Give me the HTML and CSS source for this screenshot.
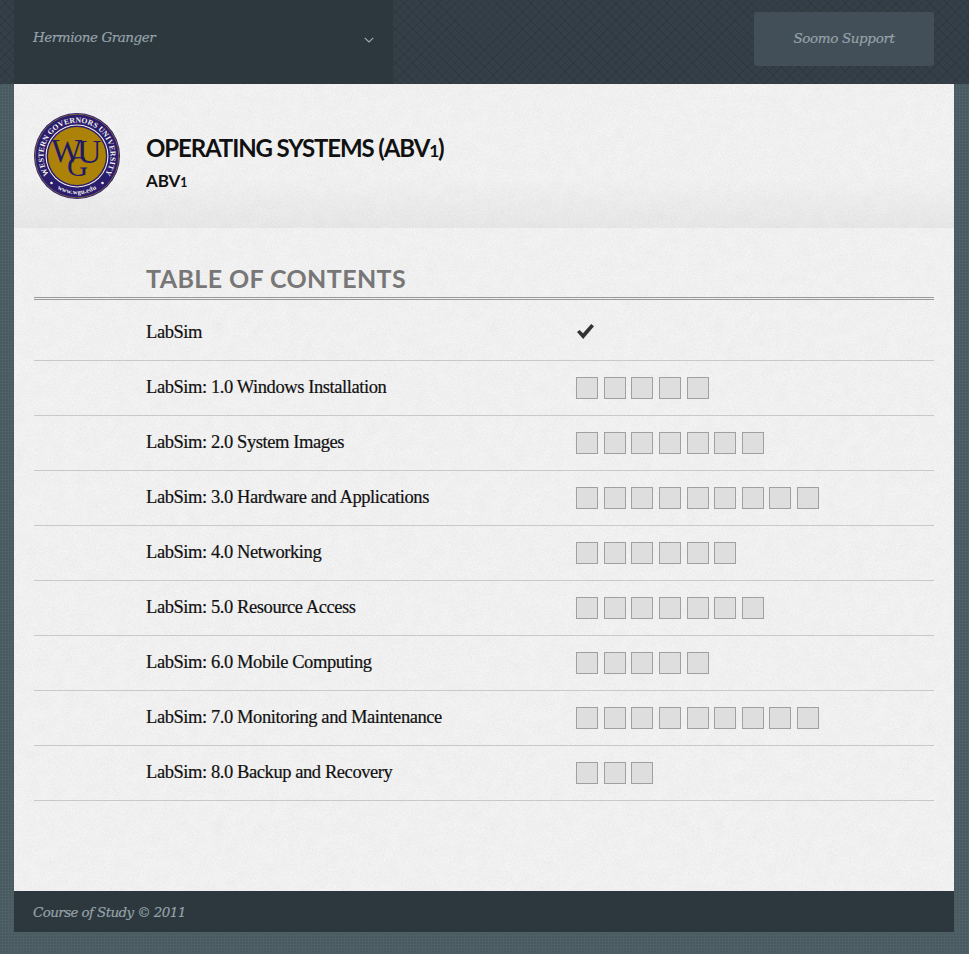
FILE: index.html
```html
<!DOCTYPE html>
<html lang="en">
<head>
<meta charset="utf-8">
<title>Operating Systems (ABV1)</title>
<link rel="stylesheet" href="styles.css">
</head>
<body>
<header class="topbar">
  <div class="user-menu">
    <span class="user-name">Hermione Granger</span>
    <svg class="chevron" width="10" height="6" viewBox="0 0 10 6"><path d="M.7.8 5 5 9.3.8" fill="none" stroke="#a3b0b5" stroke-width="1.1"/></svg>
  </div>
  <a class="support"><span class="support-label">Soomo Support</span></a>
</header>
<main class="paper">
  <section class="course">
    <svg class="logo" width="86" height="86" viewBox="0 0 86 86">
      <defs>
        <path id="arc-top" d="M17.3 64.5A33.5 33.5 0 1 1 68.7 64.5"/>
        <path id="arc-bottom" d="M15.5 69.5A38.2 38.2 0 0 0 70.5 69.5"/>
      </defs>
      <circle cx="43" cy="43" r="43" fill="#2a1d6e"/>
      <circle cx="43" cy="43" r="41.8" fill="none" stroke="#a98a2a" stroke-width=".6"/>
      <circle cx="43" cy="43" r="31.5" fill="#f2f0e4"/>
      <circle cx="43" cy="43" r="30.4" fill="#2a1d6e"/>
      <circle cx="43" cy="43" r="29" fill="#ad8208"/>
      <text class="seal-text"><textPath href="#arc-top" startOffset="50%" text-anchor="middle">WESTERN GOVERNORS UNIVERSITY</textPath></text>
      <text class="seal-url"><textPath href="#arc-bottom" startOffset="50%" text-anchor="middle">www.wgu.edu</textPath></text>
      <circle cx="17.5" cy="70" r="1.3" fill="#f2f0e4"/>
      <circle cx="68.5" cy="70" r="1.3" fill="#f2f0e4"/>
      <text class="seal-w" x="17" y="49">W</text>
      <text class="seal-u" x="43" y="50">U</text>
      <text class="seal-g" x="33" y="63">G</text>
    </svg>
    <div class="course-titles">
      <h1 class="course-name">Operating Systems (ABV<span class="small-one">1</span>)</h1>
      <p class="course-code">ABV<span class="small-one">1</span></p>
    </div>
  </section>
  <section class="toc">
    <h2 class="toc-title">Table of Contents</h2>
    <ul class="toc-list">
      <li class="toc-row toc-row-first"><span class="toc-name">LabSim</span>
        <svg class="check" width="19" height="17" viewBox="0 0 19 16"><path d="M1 8.6 3.6 6.4 7 9.8 15.2.6 18 2.8 7.2 15.4Z" fill="#333"/></svg>
      </li>
      <li class="toc-row"><span class="toc-name">LabSim: 1.0 Windows Installation</span>
        <div class="boxes"><i></i><i></i><i></i><i></i><i></i></div></li>
      <li class="toc-row"><span class="toc-name">LabSim: 2.0 System Images</span>
        <div class="boxes"><i></i><i></i><i></i><i></i><i></i><i></i><i></i></div></li>
      <li class="toc-row"><span class="toc-name">LabSim: 3.0 Hardware and Applications</span>
        <div class="boxes"><i></i><i></i><i></i><i></i><i></i><i></i><i></i><i></i><i></i></div></li>
      <li class="toc-row"><span class="toc-name">LabSim: 4.0 Networking</span>
        <div class="boxes"><i></i><i></i><i></i><i></i><i></i><i></i></div></li>
      <li class="toc-row"><span class="toc-name">LabSim: 5.0 Resource Access</span>
        <div class="boxes"><i></i><i></i><i></i><i></i><i></i><i></i><i></i></div></li>
      <li class="toc-row"><span class="toc-name">LabSim: 6.0 Mobile Computing</span>
        <div class="boxes"><i></i><i></i><i></i><i></i><i></i></div></li>
      <li class="toc-row"><span class="toc-name">LabSim: 7.0 Monitoring and Maintenance</span>
        <div class="boxes"><i></i><i></i><i></i><i></i><i></i><i></i><i></i><i></i><i></i></div></li>
      <li class="toc-row"><span class="toc-name">LabSim: 8.0 Backup and Recovery</span>
        <div class="boxes"><i></i><i></i><i></i></div></li>
    </ul>
  </section>
</main>
<footer class="footer">Course of Study © 2011</footer>
</body>
</html>
```
FILE: styles.css
```css
* { box-sizing: border-box; }
html, body { margin: 0; padding: 0; }
body {
  height: 954px;
  overflow: hidden;
  background-color: #4f6166;
  background-image:
    radial-gradient(circle at 1px 1px, rgba(30,45,50,.14) .8px, transparent 1px);
  background-size: 3px 3px;
  font-family: "Liberation Serif", serif;
}
.topbar {
  height: 84px;
  display: flex;
  justify-content: space-between;
  padding: 0 35px 0 14px;
  background-color: #343f47;
  background-image:
    repeating-linear-gradient(45deg, rgba(20,30,36,.16) 0 1px, transparent 1px 6px),
    repeating-linear-gradient(-45deg, rgba(20,30,36,.16) 0 1px, transparent 1px 6px);
}
.user-menu {
  width: 379px;
  background: #2c373e;
  display: flex;
  justify-content: space-between;
  padding: 29px 19px 0 19px;
  align-items: flex-start;
}
.user-name, .support, .footer {
  font-family: "DejaVu Serif", serif;
  font-style: italic;
  font-size: 13.5px;
  -webkit-text-stroke: .2px currentColor;
}
.user-name { color: #95a3a9; line-height: 16px; letter-spacing: -.45px; }
.chevron { margin-top: 8px; }
.support {
  width: 180px;
  height: 54px;
  margin-top: 12px;
  background: #434f58;
  border-radius: 3px;
  color: #95a3a9;
  letter-spacing: -.38px;
  display: flex;
  align-items: center;
  justify-content: center;
}
.support-label { margin-bottom: 2px; }
.paper {
  margin: 0 15px 0 14px;
  height: 807px;
  background-color: #f5f5f5;
  background-image:
    url("data:image/svg+xml,%3Csvg xmlns='http://www.w3.org/2000/svg' width='400' height='400'%3E%3Cfilter id='n'%3E%3CfeTurbulence type='fractalNoise' baseFrequency='.7' numOctaves='3' seed='4' stitchTiles='stitch'/%3E%3CfeColorMatrix values='0 0 0 0 .6 0 0 0 0 .6 0 0 0 0 .6 .3 .3 0 0 -.2'/%3E%3C/filter%3E%3Crect width='400' height='400' filter='url(%23n)'/%3E%3C/svg%3E"),
    url("data:image/svg+xml,%3Csvg xmlns='http://www.w3.org/2000/svg' width='500' height='500'%3E%3Cfilter id='b'%3E%3CfeTurbulence type='fractalNoise' baseFrequency='.08' numOctaves='4' seed='9' stitchTiles='stitch'/%3E%3CfeColorMatrix values='0 0 0 0 .65 0 0 0 0 .65 0 0 0 0 .65 .15 .15 0 0 -.12'/%3E%3C/filter%3E%3Crect width='500' height='500' filter='url(%23b)'/%3E%3C/svg%3E");
}
.course {
  height: 144px;
  display: flex;
  align-items: flex-start;
  padding: 29px 0 0 20px;
  background: linear-gradient(to bottom, rgba(0,0,0,0) 65%, rgba(0,0,0,.045) 100%);
}
.logo { flex: none; }
.seal-text { font: 700 7.7px "Liberation Serif", serif; fill: #f5f3ea; letter-spacing: .1px; }
.seal-url { font: 700 6.6px "Liberation Serif", serif; fill: #f5f3ea; letter-spacing: .2px; }
.seal-w, .seal-u, .seal-g { font-family: "Liberation Serif", serif; fill: #1f1a66; }
.seal-w { font-size: 33px; }
.seal-u { font-size: 34px; }
.seal-g { font-size: 29px; }
.course-titles { margin: 21px 0 0 26px; }
.course-name {
  margin: 0;
  font: 700 24px/28px Lato, sans-serif;
  letter-spacing: -1.12px;
  text-transform: uppercase;
  color: #111;
}
.small-one { font-size: .72em; }
.course-code {
  margin: 6px 0 0;
  font: 700 17px/20px Lato, sans-serif;
  letter-spacing: -.1px;
  color: #111;
}
.toc { padding: 36px 20px 0 20px; }
.toc-title {
  margin: 0;
  height: 36px;
  padding-left: 112px;
  font: 700 25px/28px Lato, sans-serif;
  letter-spacing: .4px;
  text-transform: uppercase;
  color: #777;
  border-bottom: 3px double #999;
}
.toc-list { margin: 0; padding: 0; list-style: none; }
.toc-row {
  height: 55px;
  display: flex;
  align-items: center;
  padding-left: 112px;
  border-bottom: 1px solid #c9c9c9;
}
.toc-row-first { height: 61px; padding-top: 3px; }
.toc-name {
  width: 430px;
  flex: none;
  margin-bottom: 2px;
  font-size: 18.5px;
  letter-spacing: -.42px;
  -webkit-text-stroke: .2px currentColor;
  color: #111;
}
.toc-row-first .toc-name { margin: 2px 0 0; }
.boxes { display: flex; gap: 5.63px; }
.boxes i {
  width: 22px;
  height: 22px;
  background: #dedede;
  border: 1px solid #a0a0a0;
}
.footer {
  height: 41px;
  margin: 0 15px 0 14px;
  padding: 0 19px;
  display: flex;
  align-items: center;
  background: #2c373e;
  color: #95a3a9;
  letter-spacing: -.62px;
}
```
